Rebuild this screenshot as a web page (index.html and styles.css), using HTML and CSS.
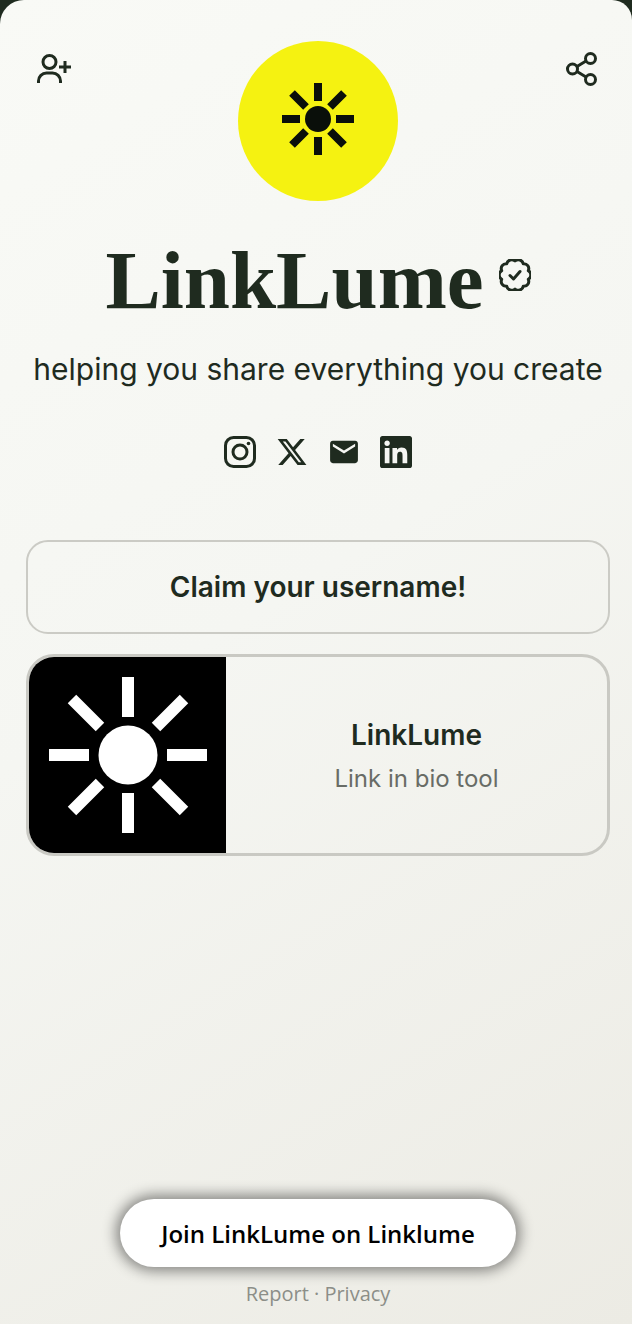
FILE: index.html
```html
<!DOCTYPE html>
<html lang="en">

<head>
    <meta charset="UTF-8">
    <meta name="viewport" content="width=device-width, initial-scale=1.0">
    <title>LinkLume</title>
    <link rel="stylesheet" href="styles.css">
</head>

<body>
    <div class="page">

        <!-- Head -->
        <header class="top">
            <button class="top-button" aria-label="Subscribe">
                <svg class="top-icon" viewBox="0 0 36 36">
                    <circle cx="13.5" cy="12" r="6.5" />
                    <path d="M2.5 33v-2a8 8 0 0 1 8-8h6a8 8 0 0 1 8 8v2" />
                    <path d="M23 17h12M29 11v12" />
                </svg>
            </button>
            <div class="logo">
                <svg class="logo-sun" viewBox="-40 -40 80 80">
                    <circle r="13" />
                    <path d="M0 -36V-18M0 18V36M-36 0H-18M18 0H36M-26 -26L-12 -12M26 -26L12 -12M-26 26L-12 12M26 26L12 12" />
                </svg>
            </div>
            <button class="top-button" aria-label="Share">
                <svg class="top-icon" viewBox="0 0 36 36">
                    <circle cx="26.5" cy="8.5" r="5" />
                    <circle cx="8.5" cy="19" r="5" />
                    <circle cx="26.5" cy="29.5" r="5" />
                    <path d="M13 16.5L22 11M13 21.5L22 27" />
                </svg>
            </button>
        </header>

        <!-- Profile -->
        <div class="title-row">
            <h1 class="title">LinkLume</h1>
            <svg class="badge" viewBox="0 0 32 32">
                <path d="M16 2A5 5 0 0 1 24.23 4.67A5 5 0 0 1 29.31 11.67A5 5 0 0 1 29.31 20.33A5 5 0 0 1 24.23 27.33A5 5 0 0 1 16 30A5 5 0 0 1 7.77 27.33A5 5 0 0 1 2.69 20.33A5 5 0 0 1 2.69 11.67A5 5 0 0 1 7.77 4.67A5 5 0 0 1 16 2Z" />
                <path d="M11 16.5L14.5 20L21 12.5" />
            </svg>
        </div>
        <p class="tagline">helping you share everything you create</p>

        <div class="socials">
            <svg class="social-line" viewBox="0 0 32 32">
                <rect x="1.5" y="1.5" width="29" height="29" rx="8" />
                <circle cx="16" cy="16" r="7" />
                <circle class="dot" cx="24.5" cy="7.5" r="1.8" />
            </svg>
            <svg class="social" viewBox="0 0 24 24">
                <path d="M18.244 2.25h3.308l-7.227 8.26 8.502 11.24H16.17l-5.214-6.817L4.99 21.75H1.68l7.73-8.835L1.254 2.25H8.08l4.713 6.231zm-1.161 17.52h1.833L7.084 4.126H5.117z" />
            </svg>
            <svg class="social" viewBox="0.5 0.5 23 23">
                <path d="M20 4H4c-1.1 0-2 .9-2 2v12c0 1.1.9 2 2 2h16c1.1 0 2-.9 2-2V6c0-1.1-.9-2-2-2zm0 4l-8 5-8-5V6l8 5 8-5v2z" />
            </svg>
            <svg class="social" viewBox="0 0 24 24">
                <path d="M20.447 20.452h-3.554v-5.569c0-1.328-.027-3.037-1.852-3.037-1.853 0-2.136 1.445-2.136 2.939v5.667H9.351V9h3.414v1.561h.046c.477-.9 1.637-1.85 3.37-1.85 3.601 0 4.267 2.37 4.267 5.455v6.286zM5.337 7.433c-1.144 0-2.063-.926-2.063-2.065 0-1.138.92-2.063 2.063-2.063 1.14 0 2.064.925 2.064 2.063 0 1.139-.925 2.065-2.064 2.065zm1.782 13.019H3.555V9h3.564v11.452zM22.225 0H1.771C.792 0 0 .774 0 1.729v20.542C0 23.227.792 24 1.771 24h20.451C23.2 24 24 23.227 24 22.271V1.729C24 .774 23.2 0 22.222 0h.003z" />
            </svg>
        </div>

        <!-- Links -->
        <a class="link-plain" href="#">Claim your username!</a>

        <a class="link-card" href="#">
            <div class="link-thumb">
                <svg class="thumb-sun" viewBox="-90 -90 180 180">
                    <circle r="29.5" />
                    <path d="M0 -78V-38M0 38V78M-79 0H-39M39 0H79M-56 -56L-28 -28M56 -56L28 -28M-56 56L-28 28M56 56L28 28" />
                </svg>
            </div>
            <div class="link-text">
                <div class="link-name">LinkLume</div>
                <div class="link-desc">Link in bio tool</div>
            </div>
        </a>

        <!-- Foot -->
        <footer class="foot">
            <a class="join" href="#">Join LinkLume on Linklume</a>
            <div class="legal">Report · Privacy</div>
        </footer>

    </div>
</body>

</html>
```

FILE: styles.css
```css
/* General */
html,
body {
    margin: 0;
    height: 100%;
}

body {
    background-color: #1f2b1f;
    font-family: Inter, "Liberation Sans", sans-serif;
    color: #1f2b1f;
}

a {
    text-decoration: none;
    color: inherit;
}

.page {
    box-sizing: border-box;
    height: 1324px;
    padding: 41px 22px 0 26px;
    display: flex;
    flex-direction: column;
    overflow: hidden;
    border-radius: 24px 20px 0 0;
    background: linear-gradient(148deg, #f9faf6 0%, #f5f6f2 45%, #ecebe4 100%);
}

/* Head */
.top {
    display: flex;
    justify-content: space-between;
    align-items: flex-start;
}

.top-button {
    margin: 9px 10px 0;
    padding: 0;
    border: none;
    background: none;
    width: 36px;
    height: 36px;
}

.top-icon {
    display: block;
    width: 36px;
    height: 36px;
    fill: none;
    stroke: #1f2b1f;
    stroke-width: 3;
    stroke-linejoin: round;
}

.logo {
    width: 160px;
    height: 160px;
    border-radius: 50%;
    background-color: #f5f211;
    display: flex;
    align-items: center;
    justify-content: center;
}

.logo-sun {
    width: 80px;
    height: 80px;
    margin-top: -4px;
    fill: #0a0f0a;
    stroke: #0a0f0a;
    stroke-width: 8;
}

.logo-sun circle {
    stroke: none;
}

/* Profile */
.title-row {
    margin-top: 29px;
    display: flex;
    justify-content: center;
    gap: 15px;
}

.title {
    margin: 0;
    font-family: "Liberation Serif", serif;
    font-weight: 700;
    font-size: 83px;
    line-height: 100px;
}

.badge {
    width: 32px;
    height: 32px;
    margin-top: 29px;
    fill: none;
    stroke: #1f2b1f;
    stroke-width: 3;
    stroke-linecap: round;
    stroke-linejoin: round;
}

.tagline {
    margin: 19px 0 0;
    text-align: center;
    font-size: 30px;
    line-height: 40px;
    white-space: nowrap;
}

.socials {
    margin-top: 47px;
    display: flex;
    justify-content: center;
    gap: 20px;
}

.social,
.social-line {
    width: 32px;
    height: 32px;
}

.social {
    fill: #1f2b1f;
}

.social-line {
    fill: none;
    stroke: #1f2b1f;
    stroke-width: 3;
}

.social-line .dot {
    fill: #1f2b1f;
    stroke: none;
}

/* Links */
.link-plain {
    box-sizing: border-box;
    margin-top: 72px;
    height: 94px;
    border: 2px solid #cbcbc5;
    border-radius: 22px;
    display: flex;
    align-items: center;
    justify-content: center;
    font-size: 28px;
    font-weight: 600;
}

.link-card {
    box-sizing: border-box;
    margin-top: 20px;
    height: 202px;
    border: 3px solid #c9c9c3;
    border-radius: 28px;
    display: flex;
    overflow: hidden;
}

.link-thumb {
    width: 197px;
    background-color: #000000;
    display: flex;
    align-items: center;
    justify-content: center;
}

.thumb-sun {
    width: 180px;
    height: 180px;
    fill: #ffffff;
    stroke: #ffffff;
    stroke-width: 12;
}

.thumb-sun circle {
    stroke: none;
}

.link-text {
    flex-grow: 1;
    display: flex;
    flex-direction: column;
    align-items: center;
    justify-content: center;
    gap: 12px;
    padding-top: 4px;
}

.link-name {
    font-size: 28px;
    line-height: 32px;
    font-weight: 600;
}

.link-desc {
    font-size: 24px;
    line-height: 32px;
    color: #686c66;
}

/* Foot */
.foot {
    margin-top: auto;
    padding-bottom: 15px;
    display: flex;
    flex-direction: column;
    align-items: center;
    font-family: "Open Sans", "Liberation Sans", sans-serif;
}

.join {
    width: 396px;
    height: 68px;
    border-radius: 34px;
    background-color: #ffffff;
    color: #000000;
    box-shadow: 0 0 14px 4px rgba(0, 0, 0, 0.45);
    display: flex;
    align-items: center;
    justify-content: center;
    font-size: 24px;
    font-weight: 600;
}

.legal {
    margin-top: 12px;
    font-size: 20px;
    line-height: 30px;
    color: #8c8e88;
}
```
